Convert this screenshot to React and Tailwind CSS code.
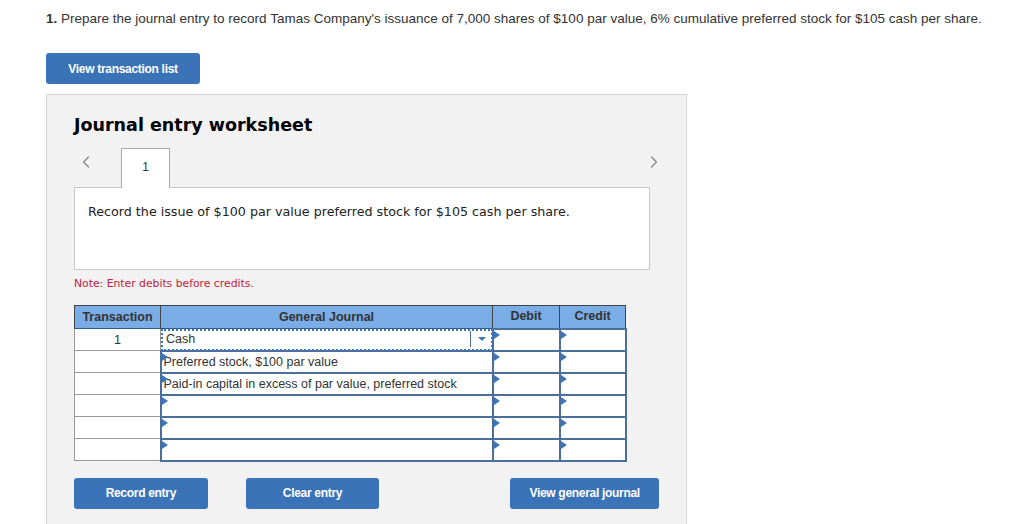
import { ChevronLeft, ChevronRight } from 'lucide-react';

const rows = [
    { tx: '1', account: 'Cash', focus: true },
    { tx: '', account: 'Preferred stock, $100 par value' },
    { tx: '', account: 'Paid-in capital in excess of par value, preferred stock' },
    { tx: '', account: '' },
    { tx: '', account: '' },
    { tx: '', account: '' },
];

function Marker() {
    return <span className="absolute left-0 top-0 h-0 w-0 border-y-[4px] border-l-[6px] border-y-transparent border-l-[#3d75b8]" />;
}

function InputCell({ children, className = '' }) {
    return (
        <td className="border-2 border-[#4b6f9c] bg-white p-0">
            <div className={`relative h-[18px] ${className}`}>
                <Marker />
                {children}
            </div>
        </td>
    );
}

export default function App() {
    return (
        <main className="min-h-screen bg-white pl-[46px] pt-[10px] font-['Liberation_Sans',Arial,sans-serif] text-[#333]">
            <p className="text-[13.5px] leading-[18px]">
                <span className="font-bold">1.</span> Prepare the journal entry to record Tamas Company's issuance of 7,000 shares of $100 par value, 6% cumulative preferred stock for $105 cash per share.
            </p>
            <button className="mt-[25px] h-[31px] w-[154px] rounded-[3px] bg-[#3a73b8] text-[12px] font-bold tracking-[-0.3px] text-white">
                View transaction list
            </button>

            <section className="mt-[10px] h-[440px] w-[641px] border border-[#d4d4d4] bg-[#f2f2f2] px-[27px] pt-[19px]">
                <h1 className="font-['DejaVu_Sans',Verdana,sans-serif] text-[17.5px] font-bold leading-[22px] text-black">Journal entry worksheet</h1>

                <div className="mt-[12px] flex h-[40px] items-start">
                    <ChevronLeft className="ml-[2px] mt-[4px] h-[20px] w-[20px] text-[#888]" strokeWidth={1.5} />
                    <div className="relative z-10 ml-[25px] flex h-[40px] w-[49px] items-start justify-center border border-b-0 border-[#aaa] bg-white pt-[9px] text-[12px]">
                        1
                    </div>
                    <ChevronRight className="ml-auto mr-[-5px] mt-[4px] h-[20px] w-[20px] text-[#888]" strokeWidth={1.5} />
                </div>
                <div className="-mt-px h-[83px] w-[576px] border border-[#c8c8c8] bg-white px-[13px] pt-[14px] font-['DejaVu_Sans',Verdana,sans-serif] text-[12.7px] text-[#222]">
                    Record the issue of $100 par value preferred stock for $105 cash per share.
                </div>
                <p className="mt-[7px] font-['DejaVu_Sans',Verdana,sans-serif] text-[10.8px] leading-[14px] text-[#c0223b]">Note: Enter debits before credits.</p>

                <table className="mt-[14px] border-collapse border border-[#999] text-[12.5px]">
                    <thead>
                        <tr className="h-[23px] bg-[#7aade6] font-bold text-[#333]">
                            <th className="w-[86px] border border-[#444] border-b-[#2f5a8f] px-1 font-bold">Transaction</th>
                            <th className="w-[332px] border border-[#444] border-b-[#2f5a8f] font-bold">General Journal</th>
                            <th className="w-[67px] border border-[#444] border-b-[#2f5a8f] font-bold">Debit</th>
                            <th className="w-[66px] border border-[#444] border-b-[#2f5a8f] font-bold">Credit</th>
                        </tr>
                    </thead>
                    <tbody>
                        {rows.map((row, i) => (
                            <tr key={i} className="h-[22px]">
                                <td className="border border-[#999] bg-white text-center leading-[18px]">{row.tx}</td>
                                {row.focus ? (
                                    <td className="bg-white p-0 outline-[2px] -outline-offset-2 outline-dotted outline-[#3d75b8]">
                                        <div className="relative flex h-[20px] items-center pl-[5px]">
                                            {row.account}
                                            <div className="absolute right-[6px] top-[2px] flex h-[16px] w-[16px] items-center justify-end border-l border-[#4b6f9c]">
                                                <span className="h-0 w-0 border-x-[4px] border-t-[4px] border-x-transparent border-t-[#3d75b8]" />
                                            </div>
                                        </div>
                                    </td>
                                ) : (
                                    <InputCell className="flex items-center pl-[2px] leading-[18px]">{row.account}</InputCell>
                                )}
                                <InputCell />
                                <InputCell />
                            </tr>
                        ))}
                    </tbody>
                </table>

                <div className="mt-[16px] flex text-[12px] font-bold tracking-[-0.3px] text-white">
                    <button className="h-[31px] w-[134px] rounded-[3px] bg-[#3a73b8]">Record entry</button>
                    <button className="ml-[38px] h-[31px] w-[134px] rounded-[3px] bg-[#3a73b8]">Clear entry</button>
                    <button className="ml-[131px] h-[31px] w-[149px] rounded-[3px] bg-[#3a73b8]">View general journal</button>
                </div>
            </section>
        </main>
    );
}
